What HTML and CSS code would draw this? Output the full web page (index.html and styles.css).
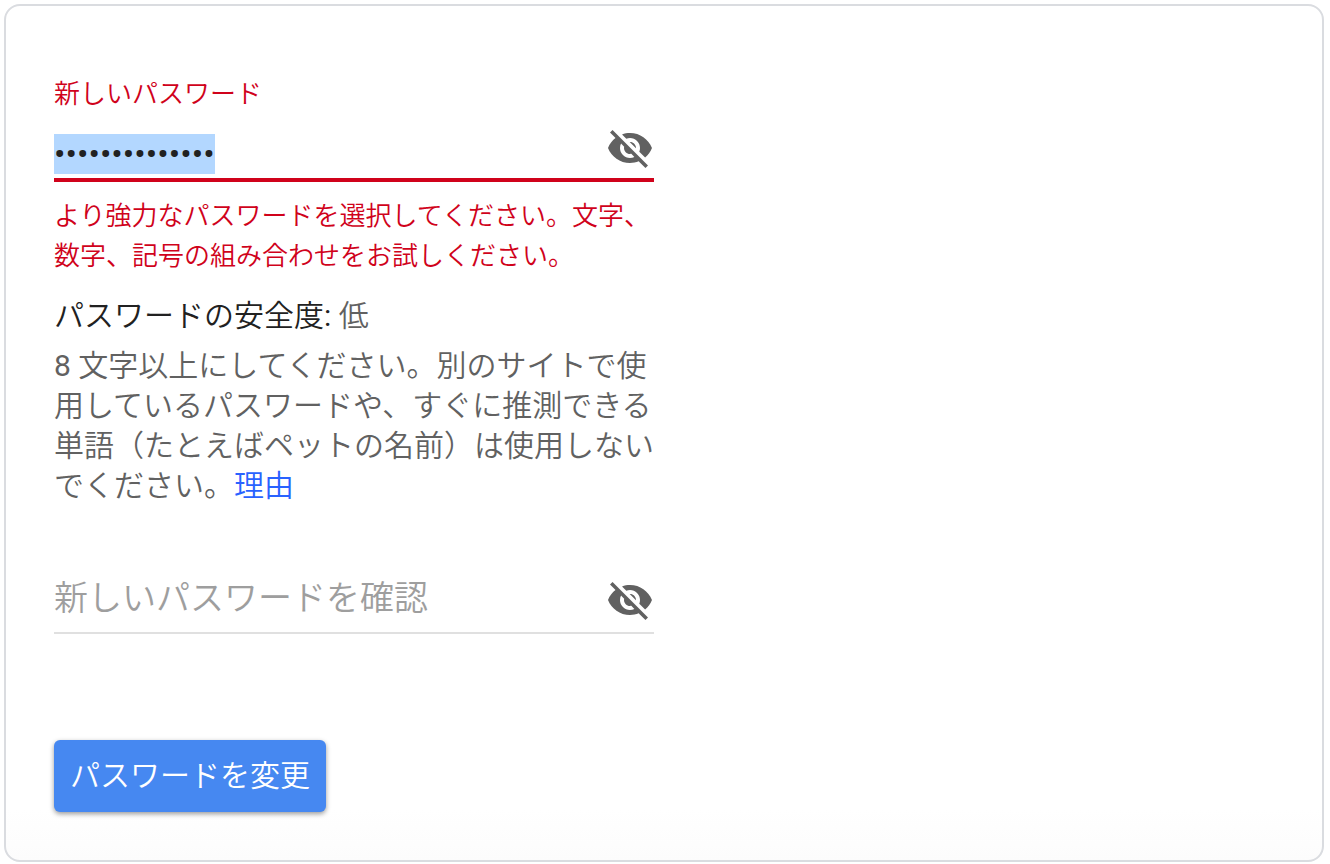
FILE: index.html
```html
<!DOCTYPE html>
<html lang="ja">
<head>
    <meta charset="UTF-8">
    <meta name="viewport" content="width=device-width, initial-scale=1.0">
    <title>パスワード</title>
    <link rel="stylesheet" href="styles.css">
</head>
<body>
    <main class="card">
        <form class="password-form">
            <label class="label" for="newPassword">新しいパスワード</label>
            <div class="field field-error">
                <input type="password" id="newPassword" value="abcdefghijklmn" aria-describedby="passwordError" aria-invalid="true">
                <button type="button" class="toggle-btn" aria-label="パスワードを表示">
                    <svg viewBox="0 0 24 24"><path d="M12 7c2.76 0 5 2.24 5 5 0 .65-.13 1.26-.36 1.83l2.92 2.92c1.51-1.26 2.7-2.89 3.43-4.75-1.73-4.39-6-7.5-11-7.5-1.4 0-2.74.25-3.98.7l2.16 2.16C10.74 7.13 11.35 7 12 7zM2 4.27l2.28 2.28.46.46C3.08 8.3 1.78 10.02 1 12c1.73 4.39 6 7.5 11 7.5 1.55 0 3.03-.3 4.38-.84l.42.42L19.73 22 21 20.73 3.27 3 2 4.27zM7.53 9.8l1.55 1.55c-.05.21-.08.43-.08.65 0 1.66 1.34 3 3 3 .22 0 .44-.03.65-.08l1.55 1.55c-.67.33-1.41.53-2.2.53-2.76 0-5-2.24-5-5 0-.79.2-1.53.53-2.2zm4.31-.78l3.15 3.15.02-.16c0-1.66-1.34-3-3-3l-.17.01z"/></svg>
                </button>
            </div>
            <p class="error" id="passwordError">より強力なパスワードを選択してください。文字、数字、記号の組み合わせをお試しください。</p>

            <p class="strength">パスワードの安全度<span class="latin">: </span><span class="level">低</span></p>
            <p class="hint"><span class="latin">8 </span>文字以上にしてください。別のサイトで使用しているパスワードや、すぐに推測できる単語（たとえばペットの名前）は使用しないでください。<a href="#">理由</a></p>

            <div class="field field-confirm">
                <input type="password" id="confirmPassword" placeholder="新しいパスワードを確認" aria-label="新しいパスワードを確認">
                <button type="button" class="toggle-btn" aria-label="パスワードを表示">
                    <svg viewBox="0 0 24 24"><path d="M12 7c2.76 0 5 2.24 5 5 0 .65-.13 1.26-.36 1.83l2.92 2.92c1.51-1.26 2.7-2.89 3.43-4.75-1.73-4.39-6-7.5-11-7.5-1.4 0-2.74.25-3.98.7l2.16 2.16C10.74 7.13 11.35 7 12 7zM2 4.27l2.28 2.28.46.46C3.08 8.3 1.78 10.02 1 12c1.73 4.39 6 7.5 11 7.5 1.55 0 3.03-.3 4.38-.84l.42.42L19.73 22 21 20.73 3.27 3 2 4.27zM7.53 9.8l1.55 1.55c-.05.21-.08.43-.08.65 0 1.66 1.34 3 3 3 .22 0 .44-.03.65-.08l1.55 1.55c-.67.33-1.41.53-2.2.53-2.76 0-5-2.24-5-5 0-.79.2-1.53.53-2.2zm4.31-.78l3.15 3.15.02-.16c0-1.66-1.34-3-3-3l-.17.01z"/></svg>
                </button>
            </div>

            <button type="submit" class="submit-btn">パスワードを変更</button>
        </form>
    </main>

    <script>
        // select the rejected password so it can be typed over
        const newPassword = document.getElementById('newPassword');
        newPassword.focus();
        newPassword.select();
    </script>
</body>
</html>
```
FILE: styles.css
```css
* {
    box-sizing: border-box;
}
body {
    margin: 0;
    padding: 4px 6px 2px 4px;
    background: white;
    font-family: Roboto, "Noto Sans CJK JP", sans-serif;
    font-weight: 350;
    line-height: 40px;
    color: #212121;
}
.card {
    padding: 68px 48px 48px;
    border: 2px solid #dadce0;
    border-radius: 16px;
    background: linear-gradient(to top, #fcfcfc, white 50px);
}
.password-form {
    max-width: 600px;
}
p {
    margin: 0;
}
.label {
    display: block;
    margin-bottom: 20px;
    font-size: 26px;
    color: #d0021b;
}
.latin {
    font-weight: 400;
}
.field {
    display: flex;
    align-items: flex-end;
    border-bottom: 2px solid #e0e0e0;
}
.field input {
    flex: 1;
    min-width: 0;
    height: 40px;
    padding: 0;
    border: none;
    outline: none;
    background: transparent;
    font-family: Roboto, "Noto Sans CJK JP", sans-serif;
    font-size: 34px;
    font-weight: 400;
    color: #212121;
}
.field input::placeholder {
    font-weight: 350;
    color: #9e9e9e;
}
.field input::selection {
    background: #b3d7ff;
    color: #212121;
}
.field-error {
    padding-bottom: 4px;
    border-bottom: 4px solid #d0021b;
}
.field-confirm {
    margin-top: 70px;
    padding-bottom: 8px;
}
.field-confirm input {
    margin-bottom: 6px;
}
.toggle-btn {
    width: 48px;
    height: 48px;
    margin: 0;
    padding: 0;
    border: none;
    background: none;
    cursor: pointer;
}
.field-error .toggle-btn {
    margin: -10px 0 2px;
}
.toggle-btn svg {
    display: block;
    width: 48px;
    height: 48px;
    fill: #616161;
}
.error {
    margin-top: 14px;
    font-size: 26px;
    color: #d0021b;
}
.strength {
    margin-top: 20px;
    font-size: 30px;
}
.level {
    color: #616161;
}
.hint {
    margin-top: 10px;
    font-size: 30px;
    color: #616161;
}
.hint a {
    color: #2962ff;
    text-decoration: none;
}
.submit-btn {
    display: block;
    height: 72px;
    margin-top: 106px;
    padding: 0 16px 6px;
    border: none;
    border-radius: 6px;
    background: #4688f1;
    box-shadow: 0 2px 5px rgba(0,0,0,0.4);
    font-family: Roboto, "Noto Sans CJK JP", sans-serif;
    font-size: 30px;
    font-weight: 350;
    color: white;
    cursor: pointer;
}
```
